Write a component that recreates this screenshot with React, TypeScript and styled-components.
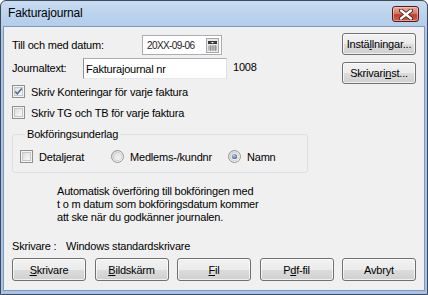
import styled, { createGlobalStyle } from "styled-components";

const GlobalStyle = createGlobalStyle`
  html, body {
    margin: 0;
    padding: 0;
    background: #ffffff;
  }
  * {
    box-sizing: border-box;
  }
`;

const Window = styled.div`
  width: 428px;
  height: 295px;
  display: flex;
  flex-direction: column;
  border: 1px solid #3f4a58;
  border-radius: 6px 6px 0 0;
  background: linear-gradient(#c8dbf1, #b6cfec 20px, #a9c6e9 40px, #a7c4e8);
  font-family: "Liberation Sans", Arial, sans-serif;
  font-size: 11px;
  letter-spacing: -0.2px;
  color: #000;
`;

const TitleBar = styled.div`
  height: 25px;
  display: flex;
  align-items: flex-start;
  justify-content: space-between;
  padding: 4px 8px 0 7px;
`;

const Title = styled.div`
  font-size: 12px;
  line-height: 16px;
  letter-spacing: -0.15px;
`;

const CloseButton = styled.div`
  width: 27px;
  height: 16px;
  margin-top: 1px;
  display: flex;
  align-items: center;
  justify-content: center;
  border: 1px solid #4f1e18;
  border-radius: 3px;
  background: linear-gradient(#e9a99b, #d57a68 45%, #c2402c 55%, #d25b48);
  box-shadow: inset 0 0 0 1px rgba(255, 220, 210, 0.5);
`;

const Body = styled.div`
  flex: 1;
  margin: 0 2px 3px 2px;
  border: 1px solid #7f98b8;
  background: #f0f0f0;
  display: flex;
  flex-direction: column;
`;

const Top = styled.div`
  display: flex;
`;

const Main = styled.div`
  flex: 1;
  padding: 8px 0 0 8px;
  display: flex;
  flex-direction: column;
`;

const Side = styled.div`
  width: 74px;
  margin-right: 8px;
  padding-top: 6px;
  display: flex;
  flex-direction: column;
  gap: 7px;
`;

const FieldRow = styled.div<{ $top?: number }>`
  display: flex;
  align-items: center;
  margin-top: ${(p) => p.$top ?? 0}px;
`;

const Label = styled.div<{ $width: number }>`
  width: ${(p) => p.$width}px;
  line-height: 13px;
  white-space: nowrap;
`;

const DateBox = styled.div`
  width: 80px;
  height: 20px;
  display: flex;
  align-items: center;
  justify-content: space-between;
  padding: 0 2px 0 4px;
  background: #fff;
  border: 1px solid #abadb3;
  font-size: 10px;
  letter-spacing: -0.6px;
  color: #1a1a1a;
`;

const TextInput = styled.div`
  width: 144px;
  height: 21px;
  display: flex;
  align-items: center;
  padding-left: 2px;
  background: #fff;
  border: 1px solid #abadb3;
  border-color: #abadb3 #dbdfe6 #e3e9ef #e2e3ea;
  border-left-color: #8d8f94;
`;

const Number = styled.div`
  margin-left: 6px;
  margin-top: -3px;
`;

const CheckRow = styled.label<{ $top?: number; $width?: number }>`
  display: flex;
  align-items: center;
  gap: 6px;
  height: 13px;
  margin-top: ${(p) => p.$top ?? 0}px;
  width: ${(p) => (p.$width ? `${p.$width}px` : "auto")};
  white-space: nowrap;
`;

const GroupBox = styled.fieldset`
  width: 296px;
  margin: 9px 0 0 0;
  padding: 9px 0 9px 7px;
  border: 1px solid #d5dfe5;
  border-radius: 3px;
  min-width: 0;
`;

const Legend = styled.legend`
  margin-left: 5px;
  padding: 0 2px;
  line-height: 13px;
`;

const GroupRow = styled.div`
  display: flex;
  align-items: center;
`;

const Info = styled.div`
  margin: 12px 0 0 45px;
  line-height: 13px;
`;

const PrinterRow = styled.div`
  display: flex;
  margin: 16px 0 0 8px;
  line-height: 13px;
`;

const ButtonRow = styled.div`
  display: flex;
  justify-content: space-between;
  margin: 5px 8px 0 8px;
`;

const Button = styled.div<{ $height?: number }>`
  width: 74px;
  height: ${(p) => p.$height ?? 23}px;
  display: flex;
  align-items: center;
  justify-content: center;
  border: 1px solid #707070;
  border-radius: 3px;
  background: linear-gradient(#f2f2f2, #ebebeb 50%, #dddddd 50%, #cfcfcf);
  box-shadow: inset 0 0 0 1px rgba(255, 255, 255, 0.7);
  white-space: nowrap;
`;

const Key = styled.span`
  text-decoration: underline;
  text-underline-offset: 1px;
`;

function CheckBox({ checked }: { checked?: boolean }) {
  return (
    <svg width="13" height="13" viewBox="0 0 13 13">
      <defs>
        <linearGradient id="cbg" x1="0" y1="0" x2="1" y2="1">
          <stop offset="0" stopColor="#dcdcdc" />
          <stop offset="1" stopColor="#fbfbfb" />
        </linearGradient>
      </defs>
      <rect x="0.5" y="0.5" width="12" height="12" fill="#f4f4f4" stroke="#8e8f8f" />
      <rect x="2.5" y="2.5" width="8" height="8" fill="url(#cbg)" stroke="#c6c6c6" />
      {checked && (
        <path d="M3.2 6.5 L5.3 8.8 L9.8 3.6" fill="none" stroke="#4c6a9a" strokeWidth="1.6" />
      )}
    </svg>
  );
}

function Radio({ checked }: { checked?: boolean }) {
  return (
    <svg width="13" height="13" viewBox="0 0 13 13">
      <defs>
        <linearGradient id="rbg" x1="0" y1="0" x2="1" y2="1">
          <stop offset="0" stopColor="#d6d6d6" />
          <stop offset="1" stopColor="#fdfdfd" />
        </linearGradient>
        <radialGradient id="rdot" cx="0.4" cy="0.35" r="0.7">
          <stop offset="0" stopColor="#bcd0ea" />
          <stop offset="1" stopColor="#46638f" />
        </radialGradient>
      </defs>
      <circle cx="6.5" cy="6.5" r="6" fill="url(#rbg)" stroke="#959595" />
      <circle cx="6.5" cy="6.5" r="4.2" fill="none" stroke="#d2d2d2" />
      {checked && <circle cx="6.5" cy="6.5" r="2.6" fill="url(#rdot)" />}
    </svg>
  );
}

function CalendarIcon() {
  return (
    <svg width="13" height="15" viewBox="0 0 13 15">
      <rect x="0.5" y="0.5" width="12" height="14" fill="#e9e9e9" stroke="#a8a8a8" />
      <rect x="2" y="3" width="9" height="3" fill="#3a3a3a" />
      <path d="M5 4 L8 4 L6.5 5.5 Z" fill="#fff" />
      <rect x="2" y="7" width="9" height="6" fill="#d7d7d7" />
      <path
        d="M2 9 H11 M2 11 H11 M4.5 7 V13 M7 7 V13 M9.5 7 V13"
        stroke="#8a8a8a"
        strokeWidth="0.8"
      />
    </svg>
  );
}

function CloseGlyph() {
  return (
    <svg width="14" height="11" viewBox="0 0 14 11">
      <path
        d="M2 1.5 L12 9.5 M12 1.5 L2 9.5"
        stroke="#3b1410"
        strokeWidth="4"
        strokeLinecap="round"
      />
      <path
        d="M2 1.5 L12 9.5 M12 1.5 L2 9.5"
        stroke="#ffffff"
        strokeWidth="2.4"
        strokeLinecap="round"
      />
    </svg>
  );
}

export default function App() {
  return (
    <>
      <GlobalStyle />
      <Window>
        <TitleBar>
          <Title>Fakturajournal</Title>
          <CloseButton>
            <CloseGlyph />
          </CloseButton>
        </TitleBar>
        <Body>
          <Top>
            <Main>
              <FieldRow>
                <Label $width={130}>Till och med datum:</Label>
                <DateBox>
                  <span>20XX-09-06</span>
                  <CalendarIcon />
                </DateBox>
              </FieldRow>
              <FieldRow $top={3}>
                <Label $width={71}>Journaltext:</Label>
                <TextInput>Fakturajournal nr</TextInput>
                <Number>1008</Number>
              </FieldRow>
              <CheckRow $top={6}>
                <CheckBox checked />
                Skriv Konteringar för varje faktura
              </CheckRow>
              <CheckRow $top={8}>
                <CheckBox />
                Skriv TG och TB för varje faktura
              </CheckRow>
              <GroupBox>
                <Legend>Bokföringsunderlag</Legend>
                <GroupRow>
                  <CheckRow $width={91}>
                    <CheckBox />
                    Detaljerat
                  </CheckRow>
                  <CheckRow $width={117}>
                    <Radio />
                    Medlems-/kundnr
                  </CheckRow>
                  <CheckRow>
                    <Radio checked />
                    Namn
                  </CheckRow>
                </GroupRow>
              </GroupBox>
              <Info>
                Automatisk överföring till bokföringen med
                <br />
                t o m datum som bokföringsdatum kommer
                <br />
                att ske när du godkänner journalen.
              </Info>
            </Main>
            <Side>
              <Button $height={22}>
                Instä<Key>l</Key>lningar...
              </Button>
              <Button $height={22}>
                Skrivari<Key>n</Key>st...
              </Button>
            </Side>
          </Top>
          <PrinterRow>
            <Label $width={54}>Skrivare :</Label>
            <span>Windows standardskrivare</span>
          </PrinterRow>
          <ButtonRow>
            <Button>
              <Key>S</Key>krivare
            </Button>
            <Button>
              <Key>B</Key>ildskärm
            </Button>
            <Button>
              <Key>F</Key>il
            </Button>
            <Button>
              P<Key>d</Key>f-fil
            </Button>
            <Button>Avbryt</Button>
          </ButtonRow>
        </Body>
      </Window>
    </>
  );
}
